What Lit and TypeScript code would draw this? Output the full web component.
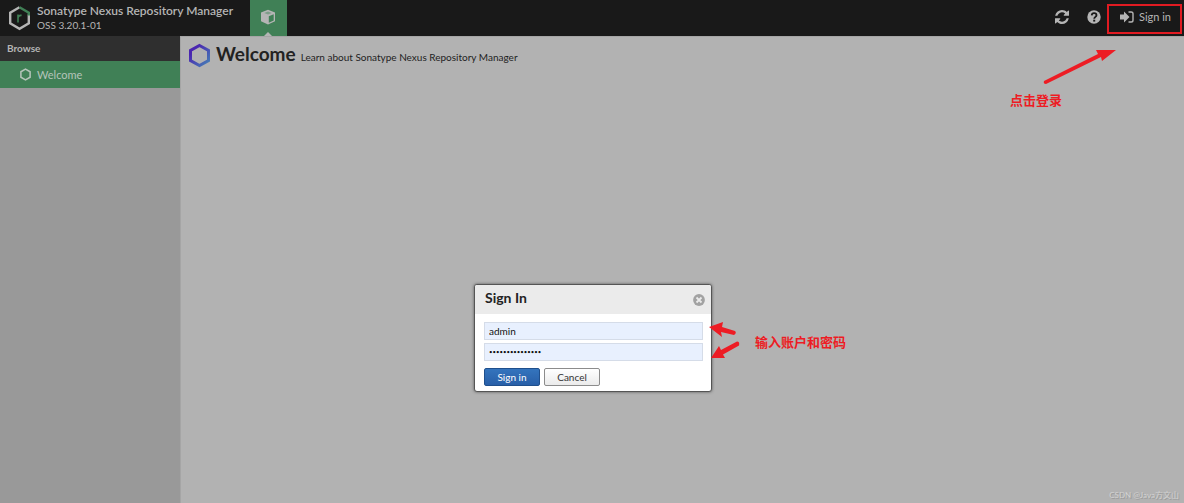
import { LitElement, html, css } from "lit";
import { customElement } from "lit/decorators.js";

const HEX = "M12 2 20.5 7v10L12 22 3.5 17V7Z";

@customElement("nexus-header")
class NexusHeader extends LitElement {
  static styles = css`
    :host { display: block; background: #191919; color: #b5b5b5; }
    .bar { display: flex; height: 36px; align-items: stretch; }
    .brand { display: flex; align-items: center; gap: 6px; width: 250px; padding-left: 8px; box-sizing: border-box; }
    .brand svg { flex: none; }
    .product { display: flex; flex-direction: column; }
    .name { font-size: 12px; line-height: 14px; font-weight: 600; white-space: nowrap; }
    .version { font-size: 10px; line-height: 14px; }
    button { border: 0; padding: 0; margin: 0; background: none; color: inherit; font: inherit; cursor: pointer; display: flex; align-items: center; }
    .mode { width: 37px; background: #408056; justify-content: center; position: relative; padding: 0 1px 3px 0; }
    .mode::after { content: ""; position: absolute; bottom: 0; left: 14px; border: 4px solid transparent; border-top: 0; border-bottom-color: #b5b5b5; }
    .actions { margin-left: auto; display: flex; align-items: center; gap: 18px; padding-right: 2px; }
    .signin { box-sizing: border-box; border: 2px solid #e11b22; width: 75px; height: 30px; justify-content: center; gap: 5px; margin-left: -12px; margin-top: 2px; padding: 0 0 5px 2px; font-size: 11px; white-space: nowrap; }
    .tool { padding-bottom: 2px; }
  `;
  render() {
    return html`<header class="bar">
      <div class="brand">
        <svg width="23" height="26" viewBox="0 0 23 26" fill="none" stroke-width="2.4" aria-hidden="true">
          <path d="M11.5 2.2 2.2 7.6v10.8l9.3 5.4 9.3-5.4V9.5" stroke="#b5b5b5" />
          <path d="M11.5 2.2 20.8 7.6v3" stroke="#408056" />
          <path d="M10 17.5v-8M10 12.8c.3-1.8 1.6-2.7 3.6-2.4" stroke="#408056" stroke-width="1.6" />
        </svg>
        <div class="product">
          <span class="name">Sonatype Nexus Repository Manager</span>
          <span class="version">OSS 3.20.1-01</span>
        </div>
      </div>
      <button class="mode" aria-label="Browse server contents">
        <svg width="16" height="16" viewBox="0 0 16 16" aria-hidden="true">
          <path d="M8 .8 15 3.5v8.800L8 15.600 1 12.300V3.500Z" fill="#b5b5b5" />
          <path d="M8 2.600 11.800 4 8 5.400 4.200 4Z" fill="#7d9d88" />
          <path d="M8.800 7.200 13.700 5.200v6.200l-4.900 2.300Z" fill="#408056" />
        </svg>
      </button>
      <div class="actions">
        <button class="tool" aria-label="Refresh">
          <svg width="14" height="14" viewBox="0 0 1536 1536" fill="#b5b5b5" aria-hidden="true">
            <path d="M1511 928q0 5-1 7-64 268-268 434.500T764 1536q-146 0-282.500-55T238 1324l-129 129q-19 19-45 19t-45-19-19-45V960q0-26 19-45t45-19h448q26 0 45 19t19 45-19 45l-137 137q71 66 161 102t187 36q134 0 250-65t186-179q11-17 53-117 8-23 30-23h192q13 0 22.500 9.500t9.500 22.500zM1536 128v448q0 26-19 45t-45 19h-448q-26 0-45-19t-19-45 19-45l138-138Q969 256 768 256q-134 0-250 65T332 500q-11 17-53 117-8 23-30 23H50q-13 0-22.500-9.500T18 608v-7q65-268 270-434.500T768 0q146 0 284 55.500T1297 212l130-129q19-19 45-19t45 19 19 45z" />
          </svg>
        </button>
        <button class="tool" aria-label="Help">
          <svg width="14" height="14" viewBox="0 0 14 14" aria-hidden="true">
            <circle cx="7" cy="7" r="6.700" fill="#b5b5b5" />
            <path d="M4.700 5.300c.3-3 4.800-2.600 4.800 0 0 1.500-2.300 1.700-2.300 3.500" fill="none" stroke="#191919" stroke-width="1.800" />
            <path d="M6.200 9.700h2v1.900h-2Z" fill="#191919" />
          </svg>
        </button>
        <button class="signin">
          <svg width="14" height="12" viewBox="0 0 14 12" aria-hidden="true">
            <path d="M0 3.500h4V.5L9.500 6 4 11.500v-3H0Z" fill="#b5b5b5" />
            <path d="M8.500 1h2.700q1.800 0 1.800 1.800v6.400q0 1.800-1.800 1.800H8.500" fill="none" stroke="#b5b5b5" stroke-width="1.400" />
          </svg>
          <span>Sign in</span>
        </button>
      </div>
    </header>`;
  }
}

@customElement("nexus-sign-in")
class NexusSignIn extends LitElement {
  static styles = css`
    :host { display: block; }
    .window { box-sizing: border-box; width: 238px; border: 1px solid #555; border-radius: 3px; background: #fff; overflow: hidden; box-shadow: 0 0 3px #555; }
    .head { display: flex; align-items: center; justify-content: space-between; height: 29px; padding: 0 6px 0 10px; background: #ebebeb; }
    h2 { margin: 0; padding-bottom: 3px; font-size: 14px; line-height: 16px; color: #222; }
    button { font: inherit; cursor: pointer; }
    .close { display: flex; border: 0; padding: 0; background: none; }
    form { display: flex; flex-direction: column; gap: 3px; padding: 8px 8px 5px 9px; }
    input { box-sizing: border-box; width: 100%; height: 18px; margin: 0; padding: 0 4px 1px; border: 1px solid #d5dce8; border-radius: 0; background: #e8f0fe; color: #111; font: inherit; font-size: 10px; outline: 0; }
    input[type="password"] { font-size: 6px; }
    .buttons { display: flex; gap: 4px; padding-top: 4px; }
    .buttons button { box-sizing: border-box; width: 56px; height: 18px; padding: 0; border-radius: 2px; font-size: 10px; line-height: 16px; }
    .primary { border: 1px solid #1f4f8c; background: linear-gradient(#3474bd, #285fa8); color: #fff; }
    .plain { border: 1px solid #8c8c8c; background: linear-gradient(#fff, #ebebeb); color: #333; }
  `;
  render() {
    return html`<section class="window" role="dialog" aria-labelledby="title">
      <div class="head">
        <h2 id="title">Sign In</h2>
        <button class="close" aria-label="Close">
          <svg width="12" height="12" viewBox="0 0 12 12" aria-hidden="true">
            <circle cx="6" cy="6" r="5.900" fill="#a2a2a2" />
            <path d="m3.500 3.500 5 5m0-5-5 5" stroke="#ebebeb" stroke-width="1.800" />
          </svg>
        </button>
      </div>
      <form @submit=${(e: Event) => e.preventDefault()}>
        <input type="text" aria-label="Username" autocomplete="off" .value=${"admin"} />
        <input type="password" aria-label="Password" autocomplete="off" .value=${"x".repeat(15)} />
        <div class="buttons">
          <button class="primary">Sign in</button>
          <button class="plain" type="button">Cancel</button>
        </div>
      </form>
    </section>`;
  }
}

@customElement("app-root")
class AppRoot extends LitElement {
  static styles = css`
    :host { display: flex; flex-direction: column; min-height: 100vh; position: relative; overflow: hidden; background: #b2b2b2; font-family: Lato, "Noto Sans CJK SC", sans-serif; }
    .body { display: flex; flex: 1; }
    .side { width: 180px; flex: none; background: #999; border-right: 1px solid #a5a5a5; }
    .side h3 { margin: 0; padding: 0 7px; background: #2f2f2f; color: #b5b5b5; font-size: 10px; line-height: 25px; }
    .item { display: flex; align-items: center; gap: 5px; height: 27px; padding-left: 19px; background: #408056; color: #b5c4ba; font-size: 11px; text-decoration: none; }
    main { flex: 1; border-top: 1px solid #a5a5a5; }
    .title { display: flex; align-items: center; gap: 5px; padding: 5px 7px; color: #222; }
    .words { display: flex; align-items: baseline; gap: 5px; padding-bottom: 2px; }
    h1 { margin: 0; font-size: 19px; line-height: 24px; }
    p { margin: 0; font-size: 10px; }
    .dialog { position: absolute; top: 284px; left: 50%; margin-left: -118px; }
    .note { position: absolute; color: #ed1c24; font-size: 13px; line-height: 20px; font-weight: 700; white-space: nowrap; font-family: "Noto Sans CJK SC", sans-serif; }
    .login { top: 90px; right: 122px; }
    .fields { top: 48px; left: 281px; }
    .arrow { position: absolute; fill: #ed1c24; }
    .up { top: 46px; right: 66px; }
    .pair { top: 38px; left: 235px; }
    .mark { position: absolute; right: 5px; bottom: 2px; color: #d2d2d2; text-shadow: 1px 1px 0 #999; font-size: 8px; line-height: 12px; }
  `;
  render() {
    return html`
      <nexus-header></nexus-header>
      <div class="body">
        <nav class="side">
          <h3>Browse</h3>
          <a class="item" href="#welcome">
            <svg width="13" height="13" viewBox="0 0 24 24" fill="none" stroke="#b5c4ba" stroke-width="2.800" aria-hidden="true"><path d=${HEX} /></svg>
            Welcome
          </a>
        </nav>
        <main>
          <div class="title">
            <svg width="23" height="25" viewBox="0 0 23 25" fill="none" aria-hidden="true">
              <defs><linearGradient id="tint" x1="0" y1="0" x2="1" y2="1"><stop offset=".2" stop-color="#4a25b0" /><stop offset="1" stop-color="#4681b6" /></linearGradient></defs>
              <path d="M11.500 2.500 20.500 7.500v10l-9 5-9-5v-10Z" stroke="url(#tint)" stroke-width="3" />
            </svg>
            <div class="words">
              <h1>Welcome</h1>
              <p>Learn about Sonatype Nexus Repository Manager</p>
            </div>
          </div>
        </main>
      </div>
      <div class="dialog">
        <nexus-sign-in></nexus-sign-in>
        <svg class="arrow pair" width="34" height="40" viewBox="0 0 34 40" aria-hidden="true">
          <path d="M0 5 14 0l-1 5 13 4q2 2-1 4L12 10l1 5Z" />
          <path d="M2 36 10 24l2 4 16-8.500q3 0 2 4L14 32.500l2 3.500Z" />
        </svg>
        <span class="note fields">输入账户和密码</span>
      </div>
      <svg class="arrow up" width="76" height="40" viewBox="0 0 76 40" aria-hidden="true">
        <path d="M74 4 60 15l-1-4L4 38q-3 0-2-3L56 8l-2-4Z" />
      </svg>
      <span class="note login">点击登录</span>
      <span class="mark">CSDN @Java方文山</span>
    `;
  }
}
